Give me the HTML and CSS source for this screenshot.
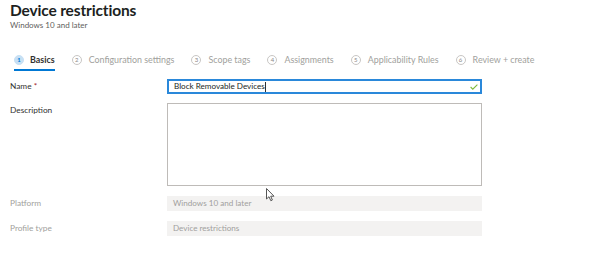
FILE: index.html
```html
<!DOCTYPE html>
<html lang="en">
<head>
<meta charset="utf-8">
<title>Device restrictions</title>
<link rel="stylesheet" href="styles.css">
</head>
<body>
<div class="page">
  <header class="head">
    <h1 class="title">Device restrictions</h1>
    <div class="subtitle">Windows 10 and later</div>
  </header>

  <nav class="steps">
    <div class="step active"><span class="num">1</span><span class="lbl">Basics</span></div>
    <div class="step"><span class="num">2</span><span class="lbl">Configuration settings</span></div>
    <div class="step"><span class="num">3</span><span class="lbl">Scope tags</span></div>
    <div class="step"><span class="num">4</span><span class="lbl">Assignments</span></div>
    <div class="step"><span class="num">5</span><span class="lbl">Applicability Rules</span></div>
    <div class="step"><span class="num">6</span><span class="lbl">Review + create</span></div>
  </nav>

  <div class="form">
    <div class="row">
      <div class="label">Name <span class="req">*</span></div>
      <div class="field focused">
        <span class="value">Block Removable Devices</span><span class="caret"></span>
        <svg class="check" width="8" height="6" viewBox="0 0 8 6"><path d="M0.6 3 L2.8 5.2 L7.4 0.6" fill="none" stroke="#7fba3c" stroke-width="1.1"/></svg>
      </div>
    </div>
    <div class="row">
      <div class="label">Description</div>
      <div class="field area"></div>
    </div>
    <div class="row disabled">
      <div class="label">Platform</div>
      <div class="field readonly">Windows 10 and later</div>
    </div>
    <div class="row disabled">
      <div class="label">Profile type</div>
      <div class="field readonly">Device restrictions</div>
    </div>
  </div>

  <svg class="pointer" width="10" height="14" viewBox="0 0 10 14"><path d="M0.5 0.5 L0.5 11 L3 8.7 L4.8 12.7 L6.4 12 L4.7 8.2 L8 8.2 Z" fill="#fff" stroke="#555" stroke-width="1" stroke-linejoin="round"/></svg>
</div>
</body>
</html>
```

FILE: styles.css
```css
* { box-sizing: border-box; }
html, body { margin: 0; padding: 0; background: #fff; }
body {
  font-family: Lato, "Open Sans", "Liberation Sans", sans-serif;
  color: #323130;
  width: 602px;
  height: 263px;
  overflow: hidden;
}
.page { position: relative; padding: 0 0 0 10px; }

.title {
  margin: 0;
  font-size: 15.5px;
  font-weight: 700;
  line-height: 20px;
  letter-spacing: -0.15px;
  color: #201f1e;
}
.subtitle {
  font-size: 8px;
  line-height: 11px;
  color: #605e5c;
}

.steps {
  display: flex;
  gap: 17px;
  margin-top: 19px;
  padding-left: 4px;
}
.step {
  display: flex;
  align-items: center;
  gap: 7px;
  height: 21px;
  padding-bottom: 2px;
  font-size: 8.9px;
  color: #a19f9d;
}
.step.active {
  gap: 6px;
  color: #323130;
  font-weight: 700;
  border-bottom: 2px solid #0078d4;
  padding-bottom: 0;
}
.num {
  width: 10px;
  height: 10px;
  border-radius: 50%;
  border: 1px solid #c8c6c4;
  font-size: 6px;
  font-weight: 400;
  display: flex;
  align-items: center;
  justify-content: center;
  color: #8a8886;
}
.step.active .num {
  background: #c7e0f4;
  border-color: #c7e0f4;
  color: #0078d4;
  font-weight: 700;
}

.form {
  margin-top: 8px;
  display: flex;
  flex-direction: column;
  gap: 9px;
}
.row { display: flex; align-items: flex-start; }
.row + .row + .row { margin-top: 1px; }
.label {
  width: 157px;
  font-size: 8.3px;
  line-height: 15px;
  color: #323130;
}
.req { color: #a4262c; }
.field {
  width: 315px;
  height: 15px;
  font-size: 8.1px;
  line-height: 13px;
  padding: 0 6px;
  border: 1px solid #8a8886;
  display: flex;
  align-items: center;
}
.field.focused {
  border: 2px solid #2a88da;
  padding-left: 5px;
  color: #201f1e;
}
.value { white-space: nowrap; }
.caret {
  display: inline-block;
  width: 1px;
  height: 10px;
  background: #323130;
  margin-left: 0.5px;
}
.check { margin-left: auto; margin-right: -4px; }
.field.area {
  height: 83px;
  border-color: #bebbb8;
}
.field.readonly {
  border: none;
  background: #f3f2f1;
  color: #a19f9d;
}
.row.disabled .label { color: #a19f9d; }

.pointer {
  position: absolute;
  left: 266px;
  top: 188px;
}
```
